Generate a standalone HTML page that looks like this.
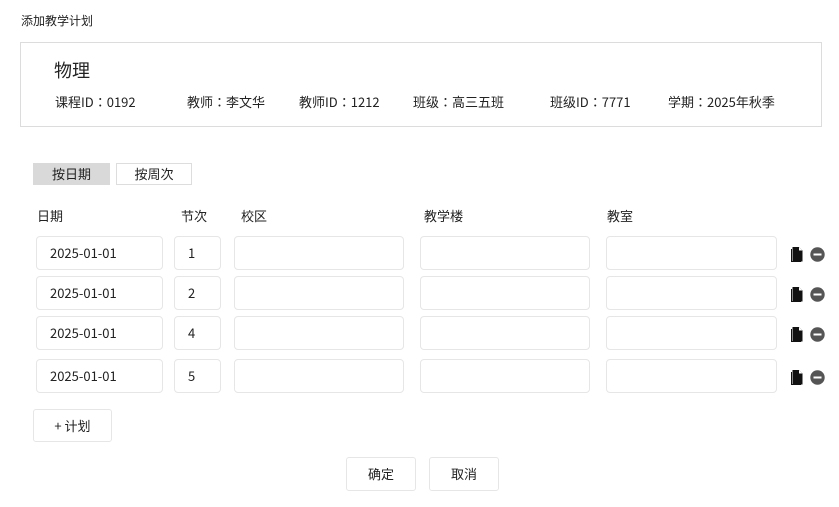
<!DOCTYPE html>
<html><head><meta charset="utf-8"><style>
*{box-sizing:border-box;margin:0;padding:0}
body{width:839px;height:507px;background:#fff;font-family:"Noto Sans CJK JP","Liberation Sans",sans-serif;color:#222;position:relative;overflow:hidden;font-size:13px}
.a{position:absolute;white-space:nowrap}
.box{position:absolute;border:1px solid #e2e2e2;border-radius:4px;background:#fff}
.in{position:absolute;border:1px solid #e6e6e6;border-radius:4px;background:#fff;height:34px;line-height:32px;padding-left:13px;font-size:13px}
.btn{position:absolute;border:1px solid #e6e6e6;border-radius:3px;background:#fff;text-align:center;font-size:13px}
</style></head><body>
<div class="a" style="left:21px;top:12px;font-size:12px">添加教学计划</div>
<div class="box" style="left:20px;top:42px;width:802px;height:85px;border-radius:0;border-color:#dcdcdc"></div>
<div class="a" style="left:54px;top:57px;font-size:18px">物理</div>
<div class="a" style="left:55px;top:92px">课程ID：0192</div>
<div class="a" style="left:187px;top:92px">教师：李文华</div>
<div class="a" style="left:299px;top:92px">教师ID：1212</div>
<div class="a" style="left:413px;top:92px">班级：高三五班</div>
<div class="a" style="left:550px;top:92px">班级ID：7771</div>
<div class="a" style="left:668px;top:92px">学期：2025年秋季</div>

<div class="a" style="left:33px;top:163px;width:77px;height:22px;background:#d9d9d9;text-align:center;line-height:22px">按日期</div>
<div class="a" style="left:116px;top:163px;width:76px;height:22px;border:1px solid #ddd;text-align:center;line-height:20px">按周次</div>

<div class="a" style="left:37px;top:206px">日期</div>
<div class="a" style="left:181px;top:206px">节次</div>
<div class="a" style="left:241px;top:206px">校区</div>
<div class="a" style="left:424px;top:206px">教学楼</div>
<div class="a" style="left:607px;top:206px">教室</div>

<div id="rows"></div>
<script>
var ys=[236,276,316,359],ns=[1,2,4,5],h='';
ys.forEach(function(y,i){
h+='<div class="in" style="left:36px;top:'+y+'px;width:127px">2025-01-01</div>';
h+='<div class="in" style="left:174px;top:'+y+'px;width:47px">'+ns[i]+'</div>';
h+='<div class="in" style="left:234px;top:'+y+'px;width:170px"></div>';
h+='<div class="in" style="left:420px;top:'+y+'px;width:170px"></div>';
h+='<div class="in" style="left:606px;top:'+y+'px;width:171px"></div>';
h+='<svg class="a" style="left:790px;top:'+(y+10)+'px" width="14" height="17" viewBox="0 0 14 17"><path d="M1 3v13h10v-1H2V3z" fill="#111"/><path d="M2.5 1h6.5l3.5 3.5V15.5H2.5z" fill="#111"/><path d="M9 1v3.5h3.5" fill="#fff"/></svg>';
h+='<svg class="a" style="left:810px;top:'+(y+11)+'px" width="15" height="15" viewBox="0 0 15 15"><circle cx="7.5" cy="7.5" r="7.2" fill="#555"/><rect x="3.5" y="6.5" width="8" height="2" fill="#fff"/></svg>';
});
document.getElementById('rows').innerHTML=h;
</script>
<div class="btn" style="left:33px;top:409px;width:79px;height:33px;line-height:31px">+ 计划</div>
<div class="btn" style="left:346px;top:457px;width:70px;height:34px;line-height:32px">确定</div>
<div class="btn" style="left:429px;top:457px;width:70px;height:34px;line-height:32px">取消</div>
</body></html>
